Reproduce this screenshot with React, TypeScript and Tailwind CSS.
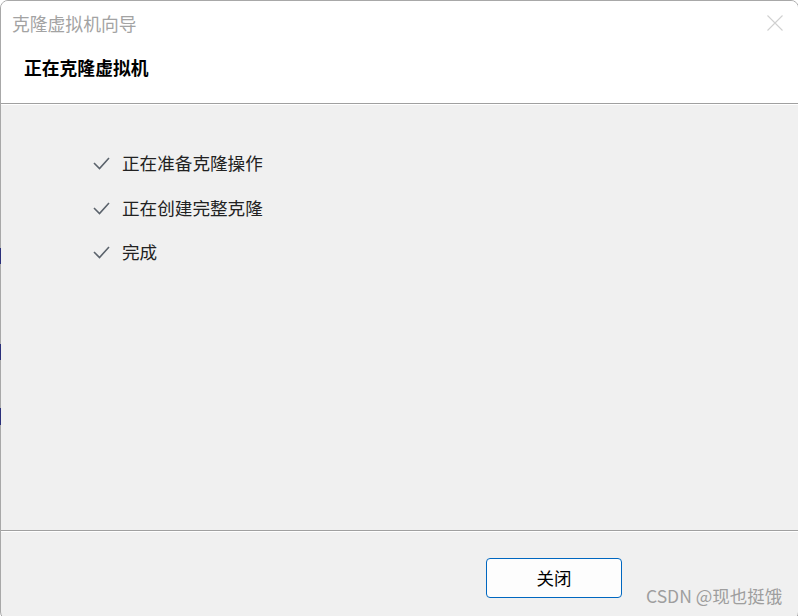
import React from "react";

const Check = () => (
  <svg width="17" height="14" viewBox="0 0 17 14" className="shrink-0">
    <polyline points="1,7 6.5,12.5 16,2" fill="none" stroke="#5b636c" strokeWidth="1.6" />
  </svg>
);

export default function App() {
  const items = ["正在准备克隆操作", "正在创建完整克隆", "完成"];
  return (
    <div
      className="relative w-[798px] h-[616px] overflow-hidden bg-white"
      style={{ fontFamily: '"Microsoft YaHei", "Noto Sans CJK SC", sans-serif' }}
    >
      <div className="absolute left-0 top-0 w-[799px] h-[620px] border border-[#a8a8a8] rounded-[8px] overflow-hidden flex flex-col bg-[#f0f0f0]">
        {/* header */}
        <div className="h-[102px] bg-white flex flex-col">
          <div className="flex items-center justify-between h-[42px] pl-[11px] pr-[14px]">
            <span className="text-[17.8px] text-[#a3a3a3] leading-[22px] mt-[1px]">克隆虚拟机向导</span>
            <svg width="18" height="18" viewBox="0 0 18 18" className="mt-[1px]">
              <path d="M1.5 1.5 L16.5 16.5 M16.5 1.5 L1.5 16.5" stroke="#d0d0d0" strokeWidth="1.1" />
            </svg>
          </div>
          <div className="pl-[23px] pt-[13px] text-[17.8px] font-bold text-black leading-[22px]">正在克隆虚拟机</div>
        </div>
        <div className="h-px bg-[#a0a0a0]" />
        <div className="h-px bg-white" />
        {/* body */}
        <div className="h-[425px] flex flex-col pl-[92px] pt-[36px]">
          {items.map((t) => (
            <div key={t} className="flex items-center h-[44.5px]">
              <Check />
              <span
                className="ml-[12px] text-[17.6px] leading-[24px] text-[#222]"
                style={{ fontFamily: '"SimSun", "Noto Sans CJK SC", serif' }}
              >
                {t}
              </span>
            </div>
          ))}
        </div>
        <div className="h-px bg-[#a0a0a0]" />
        <div className="h-px bg-white" />
        {/* footer */}
        <div className="flex-1 pl-[485px] pt-[26px]">
          <button className="w-[136px] h-[40px] rounded-[4px] border border-[#0067c0] bg-[#fdfdfd] text-[17.5px] text-black">
            关闭
          </button>
        </div>
      </div>
      {/* background artifacts at left edge */}
      <div className="absolute left-0 top-[248px] w-px h-[16px] bg-[#2a2f7a]" />
      <div className="absolute left-0 top-[344px] w-px h-[16px] bg-[#2a2f7a]" />
      <div className="absolute left-0 top-[408px] w-px h-[17px] bg-[#2a2f7a]" />
      {/* watermark */}
      <div className="absolute left-[646px] top-[585px] text-[17.5px] leading-[22px] text-[#9e9e9e] whitespace-nowrap">
        CSDN @现也挺饿
      </div>
    </div>
  );
}
